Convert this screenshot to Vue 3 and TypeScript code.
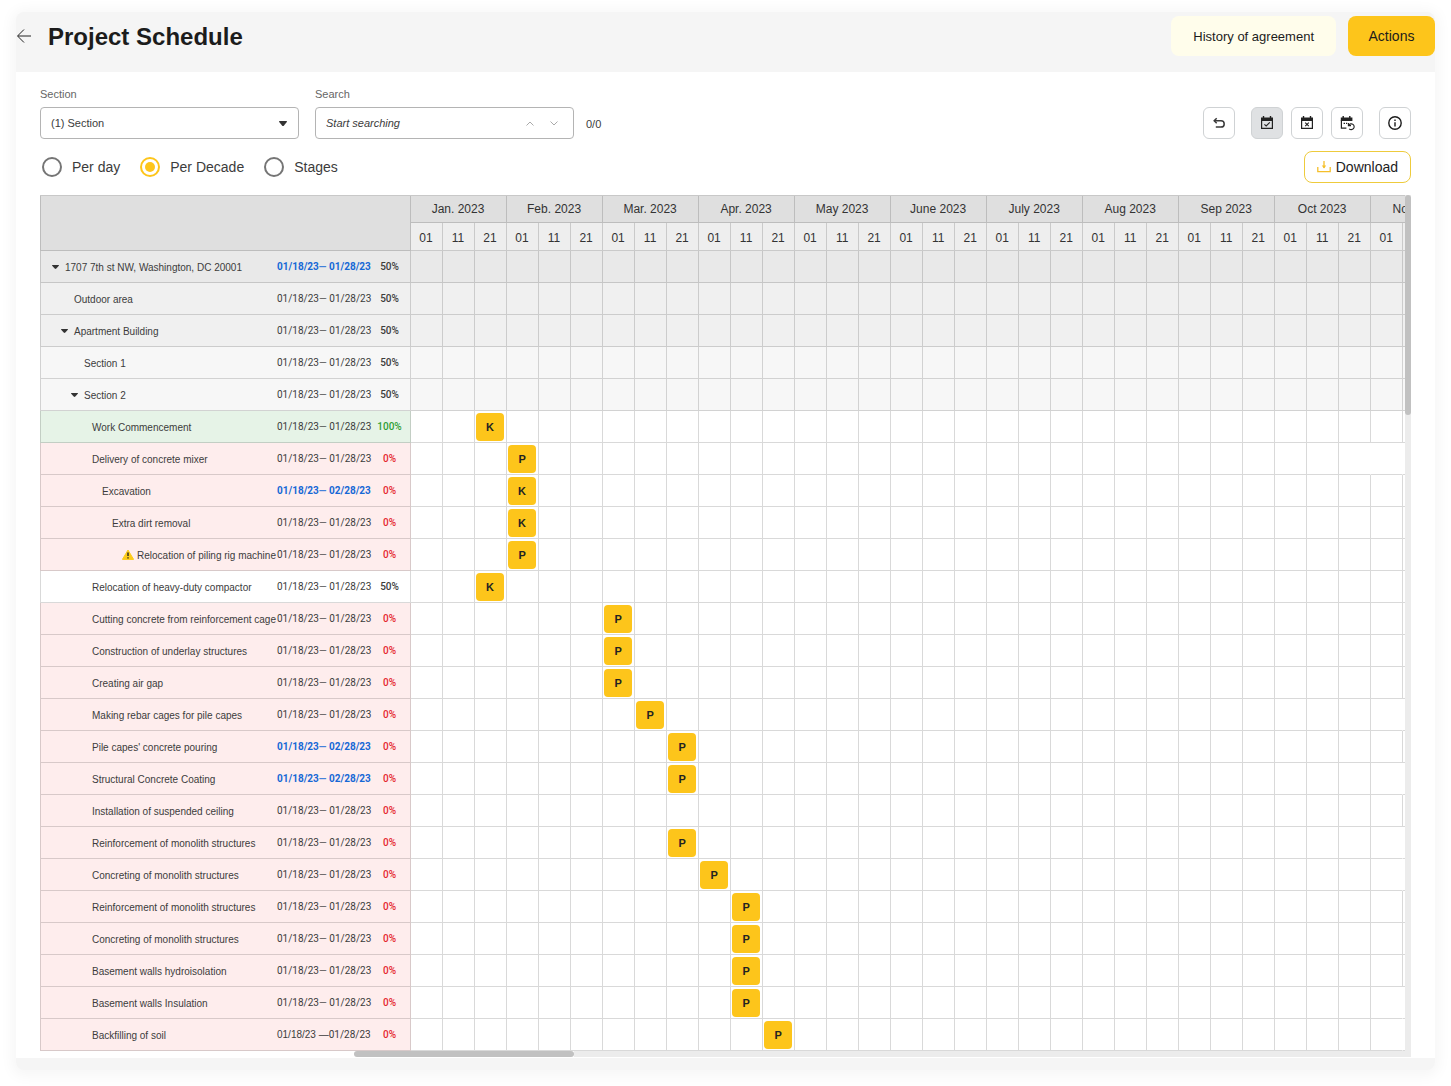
<script setup lang="ts">
import { ref } from 'vue'

type Tone = 'root' | 'area' | 'section' | 'done' | 'late' | 'plain'

interface Task {
  name: string
  level: number
  start: string
  end: string
  progress: number
  tone: Tone
  open?: boolean
  changed?: boolean
  warning?: boolean
  draft?: boolean
  slot?: number
  mark?: 'K' | 'P'
  lines?: number
}

const months = [
  'Jan. 2023', 'Feb. 2023', 'Mar. 2023', 'Apr. 2023', 'May 2023', 'June 2023',
  'July 2023', 'Aug 2023', 'Sep 2023', 'Oct 2023', 'Nov 2023',
]
const decades = ['01', '11', '21']
const slots = months.length * decades.length

function task(name: string, level: number, tone: Tone, extra: Partial<Task> = {}): Task {
  const progress = tone === 'late' ? 0 : tone === 'done' ? 100 : 50
  return { name, level, tone, progress, start: '01/18/23', end: '01/28/23', ...extra }
}

const tasks: Task[] = [
  task('1707 7th st NW, Washington, DC 20001', 0, 'root', { open: true, changed: true }),
  task('Outdoor area', 1, 'area'),
  task('Apartment Building', 1, 'area', { open: true }),
  task('Section 1', 2, 'section'),
  task('Section 2', 2, 'section', { open: true }),
  task('Work Commencement', 3, 'done', { slot: 2, mark: 'K' }),
  task('Delivery of concrete mixer', 3, 'late', { slot: 3, mark: 'P', lines: 29 }),
  task('Excavation', 4, 'late', { end: '02/28/23', changed: true, slot: 3, mark: 'K' }),
  task('Extra dirt removal', 5, 'late', { slot: 3, mark: 'K' }),
  task('Relocation of piling rig machine', 6, 'late', { warning: true, slot: 3, mark: 'P' }),
  task('Relocation of heavy-duty compactor', 3, 'plain', { slot: 2, mark: 'K' }),
  task('Cutting concrete from reinforcement cage', 3, 'late', { slot: 6, mark: 'P' }),
  task('Construction of underlay structures', 3, 'late', { slot: 6, mark: 'P' }),
  task('Creating air gap', 3, 'late', { slot: 6, mark: 'P' }),
  task('Making rebar cages for pile capes', 3, 'late', { slot: 7, mark: 'P', lines: 30 }),
  task("Pile capes' concrete pouring", 3, 'late', { end: '02/28/23', changed: true, slot: 8, mark: 'P' }),
  task('Structural Concrete Coating', 3, 'late', { end: '02/28/23', changed: true, slot: 8, mark: 'P', lines: 30 }),
  task('Installation of suspended ceiling', 3, 'late'),
  task('Reinforcement of monolith structures', 3, 'late', { slot: 8, mark: 'P', lines: 30 }),
  task('Concreting of monolith structures', 3, 'late', { slot: 9, mark: 'P', lines: 30 }),
  task('Reinforcement of monolith structures', 3, 'late', { slot: 10, mark: 'P' }),
  task('Concreting of monolith structures', 3, 'late', { slot: 10, mark: 'P' }),
  task('Basement walls hydroisolation', 3, 'late', { slot: 10, mark: 'P' }),
  task('Basement walls Insulation', 3, 'late', { slot: 10, mark: 'P', lines: 30 }),
  task('Backfilling of soil', 3, 'late', { slot: 11, mark: 'P', lines: 30, draft: true }),
]

const views = ['Per day', 'Per Decade', 'Stages']
const view = ref('Per Decade')
const section = ref('(1) Section')
const query = ref('')
</script>

<template>
  <div class="frame">
    <header class="top">
      <button class="back" type="button" aria-label="Back">
        <svg width="16" height="16" viewBox="0 0 16 16"><path d="M15 8H2M8 1.5L1.5 8L8 14.5" /></svg>
      </button>
      <h1>Project Schedule</h1>
      <button class="history" type="button">History of agreement</button>
      <button class="actions" type="button">Actions</button>
    </header>

    <main class="card">
      <div class="filters">
        <div class="field">
          <label for="section">Section</label>
          <div class="box">
            <select id="section" v-model="section">
              <option>(1) Section</option>
            </select>
            <svg class="caret" width="8" height="5" viewBox="0 0 8 5"><path d="M0.5 0H7.5Q8.3 0 7.8 1L5 4.4Q4 5.4 3 4.4L0.2 1Q-0.3 0 0.5 0Z" /></svg>
          </div>
        </div>
        <div class="field">
          <label for="search">Search</label>
          <div class="box">
            <input id="search" v-model="query" type="text" placeholder="Start searching" />
            <button class="step" type="button" aria-label="Previous result">
              <svg width="8" height="5" viewBox="0 0 8 5"><path d="M0.5 4.5L4 1L7.5 4.5" /></svg>
            </button>
            <button class="step" type="button" aria-label="Next result">
              <svg width="8" height="5" viewBox="0 0 8 5"><path d="M0.5 0.5L4 4L7.5 0.5" /></svg>
            </button>
          </div>
        </div>
        <span class="count">0/0</span>

        <div class="tools">
          <button class="tool" type="button" aria-label="Undo">
            <svg width="16" height="16" viewBox="0 0 16 16" fill="none" stroke="#3a3a3a" stroke-width="1.5">
              <path d="M3.5 5.7H10a3.2 3.2 0 0 1 0 6.4H4.8" /><path d="M5.7 3.2L3.2 5.7L5.7 8.2" />
            </svg>
          </button>
          <div class="tool-set">
            <button class="tool on" type="button" aria-label="Completed">
              <svg width="16" height="16" viewBox="0 0 16 16" fill="none" stroke="#222">
                <path d="M4.5 1V4M11.5 1V4" stroke-width="1.4" /><path d="M2 2.5H14V6H2Z" fill="#222" stroke="none" />
                <path d="M2.6 5V13.4H13.4V5" stroke-width="1.2" /><path d="M5.4 9.3L7.2 11L10.8 7.4" stroke-width="1.1" />
              </svg>
            </button>
            <button class="tool" type="button" aria-label="Cancelled">
              <svg width="16" height="16" viewBox="0 0 16 16" fill="none" stroke="#222">
                <path d="M4.5 1V4M11.5 1V4" stroke-width="1.4" /><path d="M2 2.5H14V6H2Z" fill="#222" stroke="none" />
                <path d="M2.6 5V13.4H13.4V5" stroke-width="1.2" /><path d="M6.2 7.6L9.8 11.2M9.8 7.6L6.2 11.2" stroke-width="1.1" />
              </svg>
            </button>
            <button class="tool" type="button" aria-label="Rescheduled">
              <svg width="16" height="16" viewBox="0 0 16 16" fill="none" stroke="#222">
                <path d="M4.2 1V4M10.8 1V4" stroke-width="1.4" /><path d="M1.8 2.5H13.4V6H1.8Z" fill="#222" stroke="none" />
                <path d="M2.4 5V13.2H7.4" stroke-width="1.2" />
                <path d="M4.6 8.4H6M7 8.4H8.2" stroke-width="1.2" />
                <path d="M9.8 10.2A2.9 2.9 0 1 1 10.2 13.8" stroke-width="1.1" /><path d="M9.4 8V10.6H12" stroke-width="1.1" />
              </svg>
            </button>
          </div>
          <button class="tool" type="button" aria-label="Information">
            <svg width="16" height="16" viewBox="0 0 16 16" fill="none" stroke="#1c1c1c" stroke-width="1.4">
              <circle cx="8" cy="8" r="6.2" /><path d="M8 7.2V11.4M8 4.6V6" />
            </svg>
          </button>
        </div>
      </div>

      <div class="modes">
        <label v-for="v in views" :key="v" class="mode">
          <input v-model="view" type="radio" name="view" :value="v" />{{ v }}
        </label>
        <button class="download" type="button">
          <svg width="14" height="12" viewBox="0 0 14 12" fill="none" stroke="#f5bf2a" stroke-width="1.3">
            <path d="M0.8 6V10.6H13.2V6" /><path d="M7 0V7" /><path d="M4.8 4.6H9.2L7 7.6Z" fill="#f5bf2a" stroke="none" />
          </svg>
          Download
        </button>
      </div>

      <div class="schedule">
        <div class="viewport">
          <table>
            <colgroup>
              <col class="c-name" /><col class="c-dates" /><col class="c-pct" />
              <col v-for="n in slots" :key="n" class="c-slot" />
            </colgroup>
            <thead>
              <tr class="months">
                <td class="corner" colspan="3" rowspan="2"></td>
                <th v-for="m in months" :key="m" colspan="3" scope="colgroup">{{ m }}</th>
              </tr>
              <tr class="days">
                <template v-for="m in months" :key="m">
                  <th v-for="d in decades" :key="d" scope="col">{{ d }}</th>
                </template>
              </tr>
            </thead>
            <tbody>
              <tr v-for="(t, i) in tasks" :key="i" :class="t.tone">
                <th class="name" scope="row">
                  <div class="label" :class="'level-' + t.level">
                    <button v-if="t.open" class="toggle" type="button" aria-label="Collapse">
                      <svg class="arrow" width="7" height="4" viewBox="0 0 7 4"><path d="M0.4 0H6.6Q7.2 0 6.8 0.7L4.3 3.5Q3.5 4.3 2.7 3.5L0.2 0.7Q-0.2 0 0.4 0Z" /></svg>
                    </button>
                    <span v-else class="toggle"></span>
                    <svg v-if="t.warning" class="warn" width="12" height="12" viewBox="0 0 12 12">
                      <path d="M6 1L11.6 10.4H0.4Z" fill="#fccb1a" stroke="#fccb1a" stroke-linejoin="round" />
                      <path d="M6 3.4V7M6 8.2V9.6" stroke="#222" stroke-width="1.4" />
                    </svg>
                    <span>{{ t.name }}</span>
                  </div>
                </th>
                <td class="dates" :class="{ changed: t.changed }">
                  <template v-if="t.draft"><span class="draft">{{ t.start }} —</span>{{ t.end }}</template>
                  <template v-else>{{ t.start }}<span class="dash">—</span> {{ t.end }}</template>
                </td>
                <td class="pct">{{ t.progress }}%</td>
                <td v-for="n in slots" :key="n" class="slot" :class="{ unlined: t.lines && n > t.lines }">
                  <span v-if="t.slot === n - 1" class="mark">{{ t.mark }}</span>
                </td>
              </tr>
            </tbody>
          </table>
        </div>
        <div class="v-track"><div class="thumb"></div></div>
        <div class="h-track"><div class="thumb"></div><div class="rest"></div></div>
      </div>
    </main>
  </div>
</template>

<style>
body {
  background: #fff;
}
</style>

<style scoped>
.frame,
.frame * {
  box-sizing: border-box;
}

.frame {
  margin: 12px 16px 16px;
  padding-bottom: 12px;
  background: #f5f5f5;
  border-radius: 8px;
  box-shadow: 0 2px 14px 4px rgba(0, 0, 0, 0.04);
  font-family: 'Liberation Sans', Arial, sans-serif;
  color: #3c3c3c;
}

button {
  padding: 0;
  border: 0;
  background: none;
  font-family: inherit;
  cursor: pointer;
}

.top {
  display: flex;
  align-items: center;
  padding: 4px 0 16px;
}

.back {
  display: flex;
  margin-right: 16px;
}

.back svg {
  fill: none;
  stroke: #222;
}

h1 {
  flex: 1;
  margin: 0;
  padding-top: 2px;
  font-size: 24px;
  line-height: 38px;
  color: #1c1c1c;
}

.history,
.actions {
  height: 40px;
  border-radius: 8px;
  color: #1c1c1c;
}

.history {
  margin-right: 12px;
  padding: 0 22px;
  background: #fffdeb;
  font-size: 13px;
}

.actions {
  min-width: 87px;
  padding: 0 20px;
  background: #fdc51b;
  font-size: 14px;
}

.card {
  padding: 16px 24px 1px;
  background: #fff;
}

.filters {
  display: flex;
  align-items: flex-end;
  gap: 16px;
}

.field {
  display: flex;
  flex-direction: column;
  gap: 7px;
  width: 259px;
}

.field label {
  font-size: 11px;
  line-height: 12px;
  color: #666;
}

.box {
  display: flex;
  align-items: center;
  height: 32px;
  padding: 0 11px 0 10px;
  border: 1px solid #b4b4b4;
  border-radius: 4px;
}

.box select,
.box input {
  flex: 1;
  min-width: 0;
  height: 100%;
  padding: 0;
  border: 0;
  outline: 0;
  background: none;
  appearance: none;
  font-family: inherit;
  font-size: 11px;
  color: #3c3c3c;
}

.box input::placeholder {
  font-style: italic;
  color: #3c3c3c;
}

.caret,
.arrow {
  fill: #333;
}

.step {
  display: flex;
  justify-content: center;
  width: 24px;
}

.step + .step {
  margin-right: -4px;
}

.step svg {
  fill: none;
  stroke: #aaa;
}

.count {
  margin-left: -4px;
  font-size: 11px;
  line-height: 30px;
}

.tools {
  display: flex;
  gap: 16px;
  margin-left: auto;
}

.tool-set {
  display: flex;
  gap: 8px;
}

.tool {
  display: flex;
  align-items: center;
  justify-content: center;
  width: 32px;
  height: 32px;
  border: 1px solid #cfd2d4;
  border-radius: 6px;
}

.tool.on {
  background: #dfe1e3;
}

.modes {
  display: flex;
  align-items: center;
  gap: 20px;
  margin: 12px 0;
  padding-left: 2px;
}

.mode {
  display: flex;
  align-items: center;
  gap: 10px;
  font-size: 14px;
}

.mode input {
  width: 20px;
  height: 20px;
  margin: 0;
  border: 2px solid #757575;
  border-radius: 50%;
  appearance: none;
}

.mode input:checked {
  padding: 3px;
  border-color: #fdc51b;
  background: #fdc51b content-box;
}

.download {
  display: flex;
  align-items: center;
  gap: 5px;
  height: 32px;
  margin-left: auto;
  padding: 0 12px;
  border: 1px solid #eecb3c;
  border-radius: 8px;
  font-size: 14px;
  color: #1c1c1c;
}

.schedule {
  display: grid;
  grid-template-columns: minmax(0, 1fr) 6px;
}

.viewport {
  overflow: hidden;
}

table {
  width: 100%;
  table-layout: fixed;
  border-spacing: 0;
  border-top: 1px solid #c8c8c8;
}

.c-name {
  width: 237px;
}

.c-dates {
  width: 98px;
}

.c-pct {
  width: 36px;
}

.c-slot {
  width: 32px;
}

th,
td {
  padding: 0;
  border: 0 solid rgba(0, 0, 0, 0.15);
  border-bottom-width: 1px;
  font-weight: 400;
  white-space: nowrap;
}

.corner {
  border-width: 0 1px 1px;
  background: #dfdfdf;
}

thead th {
  padding-right: 1px;
  border-right-width: 1px;
  font-size: 12px;
  color: #333;
}

.months th {
  height: 27px;
  background: #dfdfdf;
}

.days th {
  height: 28px;
  padding-top: 2px;
  background: #eee;
}

tbody tr {
  height: 32px;
}

.name {
  border-left-width: 1px;
  font-size: 10px;
  text-align: left;
}

.label {
  display: flex;
  align-items: center;
  padding-top: 1px;
}

.toggle {
  display: flex;
  justify-content: center;
  width: 12px;
  margin-right: 4px;
}

.warn {
  margin-right: 3px;
}

.level-0 {
  padding-left: 8px;
}

.level-1 {
  padding-left: 17px;
}

.level-2 {
  padding-left: 27px;
}

.level-3 {
  padding-left: 35px;
}

.level-4 {
  padding-left: 45px;
}

.level-5 {
  padding-left: 55px;
}

.level-6 {
  padding-left: 65px;
}

.dates,
.pct {
  font-family: Roboto, sans-serif;
  font-size: 10px;
}

.dates.changed {
  font-weight: 700;
  color: #1668d6;
}

.dash {
  opacity: 0.8;
}

.draft {
  font-family: 'Liberation Sans', Arial, sans-serif;
}

.pct {
  padding-right: 6px;
  border-right-width: 1px;
  font-weight: 500;
  text-align: center;
}

.slot {
  border-right-width: 1px;
}

.slot.unlined {
  border-right-color: transparent;
}

.root > * {
  background: #e9e9e9;
}

.area > * {
  background: #f0f0f0;
}

.section > * {
  background: #f7f7f7;
}

.done > :not(.slot) {
  background: #e6f3e7;
}

.done .pct {
  color: #2e9e35;
}

.late > :not(.slot) {
  background: #feeded;
}

.late .pct {
  color: #e5262e;
}

.mark {
  display: block;
  width: 28px;
  height: 28px;
  margin-left: 1px;
  border-radius: 4px;
  background: #fdc51b;
  font-size: 11px;
  font-weight: 700;
  line-height: 28px;
  text-align: center;
  color: #222;
}

.v-track {
  grid-row: span 2;
  background: #ececec;
}

.thumb {
  border-radius: 3px;
  background: #c1c1c1;
}

.v-track .thumb {
  height: 220px;
}

.h-track {
  display: flex;
  height: 6px;
  padding-left: 314px;
}

.h-track .thumb {
  width: 220px;
}

.rest {
  flex: 1;
  background: #ececec;
}
</style>
